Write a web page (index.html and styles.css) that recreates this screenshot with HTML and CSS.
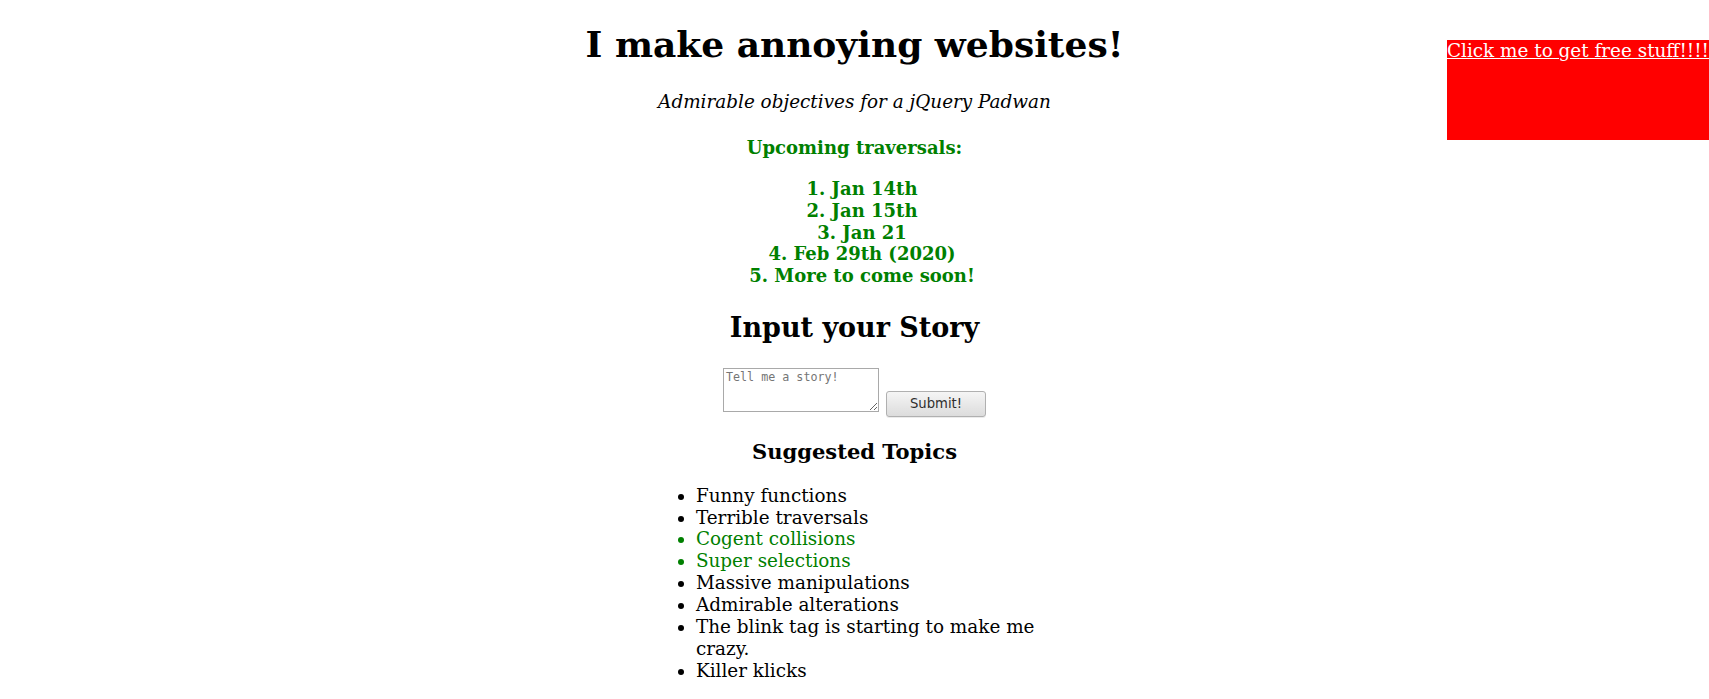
FILE: index.html
```html
<!DOCTYPE html>
<html>
<head>
<meta charset="utf-8">
<title>I make annoying websites!</title>
<link rel="stylesheet" href="styles.css">
</head>
<body class="page">
  <h1 class="title">I make annoying websites!</h1>
  <p class="subtitle">Admirable objectives for a jQuery Padwan</p>
  <p class="upcoming">Upcoming traversals:</p>
  <ol class="dates">
    <li>Jan 14th</li>
    <li>Jan 15th</li>
    <li>Jan 21</li>
    <li>Feb 29th (2020)</li>
    <li>More to come soon!</li>
  </ol>
  <h2 class="section-title">Input your Story</h2>
  <form class="story-form">
    <textarea class="story-input" placeholder="Tell me a story!"></textarea>
    <button class="submit-btn" type="button">Submit!</button>
  </form>
  <h3 class="topics-title">Suggested Topics</h3>
  <ul class="topics">
    <li>Funny functions</li>
    <li>Terrible traversals</li>
    <li class="hl">Cogent collisions</li>
    <li class="hl">Super selections</li>
    <li>Massive manipulations</li>
    <li>Admirable alterations</li>
    <li>The blink tag is starting to make me crazy.</li>
    <li>Killer klicks</li>
  </ul>
  <div class="promo"><a class="promo-link" href="#">Click me to get free stuff!!!!</a></div>
</body>
</html>
```

FILE: styles.css
```css
html {
  background: #fff;
}
.page {
  margin: 9.36px;
  font-family: "DejaVu Serif", serif;
  font-size: 18.4px;
  line-height: 21.8px;
  color: #000;
  text-align: center;
}
.title {
  font-size: 36px;
  line-height: normal;
  font-weight: bold;
  margin: 14.1px 0 25.9px;
}
.subtitle {
  font-style: italic;
  margin: 0 0 24.2px;
}
.upcoming {
  color: #008000;
  font-size: 18px;
  font-weight: bold;
  margin: 0 0 18.8px;
}
.dates {
  color: #008000;
  font-size: 18px;
  font-weight: bold;
  list-style-position: inside;
  margin: 0 0 24.8px;
  padding: 0 0 0 15px;
}
.section-title {
  font-size: 27px;
  line-height: normal;
  margin: 0 0 19.9px;
}
.story-form {
  display: flex;
  justify-content: center;
  align-items: flex-start;
  gap: 7px;
  margin: 0;
}
.story-input {
  box-sizing: border-box;
  width: 156px;
  height: 44px;
  margin: 5px 0 0 0;
  padding: 1px 2px;
  border: 1px solid #a9a9a9;
  font-family: "DejaVu Sans Mono", monospace;
  font-size: 11.7px;
  line-height: normal;
  color: #000;
}
.story-input::placeholder {
  color: #757575;
}
.submit-btn {
  box-sizing: border-box;
  width: 100px;
  height: 26px;
  margin: 28px 0 0 0;
  padding: 0;
  border: 1px solid #b0b0b0;
  border-radius: 3px;
  background: linear-gradient(#f5f5f5, #dcdcdc);
  box-shadow: 0 1px 0 rgba(0,0,0,0.08);
  font-family: "DejaVu Sans", sans-serif;
  font-size: 13.2px;
  color: #2e2e2e;
}
.topics-title {
  font-size: 21.06px;
  line-height: normal;
  margin: 22px 0 21px;
}
.topics {
  width: 364px;
  margin: 0 auto;
  padding: 0 0 0 46.8px;
  line-height: 21.9px;
  text-align: left;
}
.topics .hl {
  color: #008000;
}
.promo {
  position: absolute;
  top: 40px;
  right: 0;
  height: 100px;
  background: #ff0000;
  text-align: left;
  white-space: nowrap;
}
.promo-link {
  color: #fff;
  text-decoration: underline;
}
```
